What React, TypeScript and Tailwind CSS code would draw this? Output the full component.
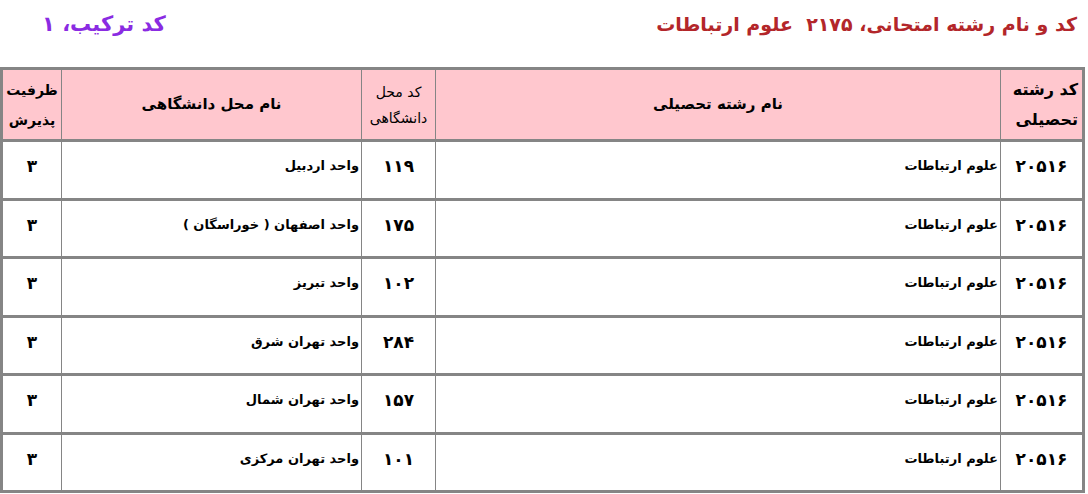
const rows = [
  { code: "۲۰۵۱۶", major: "علوم ارتباطات", placeCode: "۱۱۹", place: "واحد اردبیل", cap: "۳" },
  { code: "۲۰۵۱۶", major: "علوم ارتباطات", placeCode: "۱۷۵", place: "واحد اصفهان ( خوراسگان )", cap: "۳" },
  { code: "۲۰۵۱۶", major: "علوم ارتباطات", placeCode: "۱۰۲", place: "واحد تبریز", cap: "۳" },
  { code: "۲۰۵۱۶", major: "علوم ارتباطات", placeCode: "۲۸۴", place: "واحد تهران شرق", cap: "۳" },
  { code: "۲۰۵۱۶", major: "علوم ارتباطات", placeCode: "۱۵۷", place: "واحد تهران شمال", cap: "۳" },
  { code: "۲۰۵۱۶", major: "علوم ارتباطات", placeCode: "۱۰۱", place: "واحد تهران مرکزی", cap: "۳" },
];

export default function App() {
  return (
    <div
      dir="rtl"
      className="w-[1088px] h-[494px] bg-white overflow-hidden text-black"
      style={{ fontFamily: '"DejaVu Sans", Tahoma, sans-serif' }}
    >
      {/* Title line */}
      <div className="flex items-center justify-between h-[67px] pr-[11px] pl-[42px] pb-[18px] font-bold">
        <div className="text-[#b3262a] text-[19px]">کد و نام رشته امتحانی، ۲۱۷۵&nbsp; علوم ارتباطات</div>
        <div className="text-[#8a2be2] text-[21px]">کد ترکیب، ۱</div>
      </div>

      {/* Table */}
      <div className="px-[3px]">
        <table className="w-[1082px] table-fixed border-collapse border-[3px] border-[#858585]">
          <colgroup>
            <col className="w-[83px]" />
            <col className="w-[565px]" />
            <col className="w-[74px]" />
            <col className="w-[300px]" />
            <col className="w-[60px]" />
          </colgroup>
          <thead>
            <tr className="h-[72px] bg-[#ffc7ce] border-b-[3px] border-[#858585]">
              <th className="border-l border-[#858585] text-right font-bold text-[16px] leading-[30px] px-[4px]">
                کد رشته
                <br />
                تحصیلی
              </th>
              <th className="border-l border-[#858585] text-center font-bold text-[15px]">نام رشته تحصیلی</th>
              <th className="border-l border-[#858585] text-center font-normal text-[14px] leading-[26px]">
                کد محل
                <br />
                دانشگاهی
              </th>
              <th className="border-l border-[#858585] text-center font-bold text-[15px]">نام محل دانشگاهی</th>
              <th className="text-center font-bold text-[14px] leading-[30px]">
                ظرفیت
                <br />
                پذیرش
              </th>
            </tr>
          </thead>
          <tbody>
            {rows.map((r, i) => (
              <tr key={i} className="h-[58.5px] border-b-[3px] border-[#858585]">
                <td className="border-l border-[#858585] align-top pt-[12px] text-center font-bold text-[17px]">
                  {r.code}
                </td>
                <td className="border-l border-[#858585] align-top pt-[14px] pr-[2px] text-right font-bold text-[13px]">
                  {r.major}
                </td>
                <td className="border-l border-[#858585] align-top pt-[12px] text-center font-bold text-[17px]">
                  {r.placeCode}
                </td>
                <td className="border-l border-[#858585] align-top pt-[14px] pr-[2px] text-right font-bold text-[13px]">
                  {r.place}
                </td>
                <td className="align-top pt-[12px] text-center font-bold text-[17px]">{r.cap}</td>
              </tr>
            ))}
          </tbody>
        </table>
      </div>
    </div>
  );
}
